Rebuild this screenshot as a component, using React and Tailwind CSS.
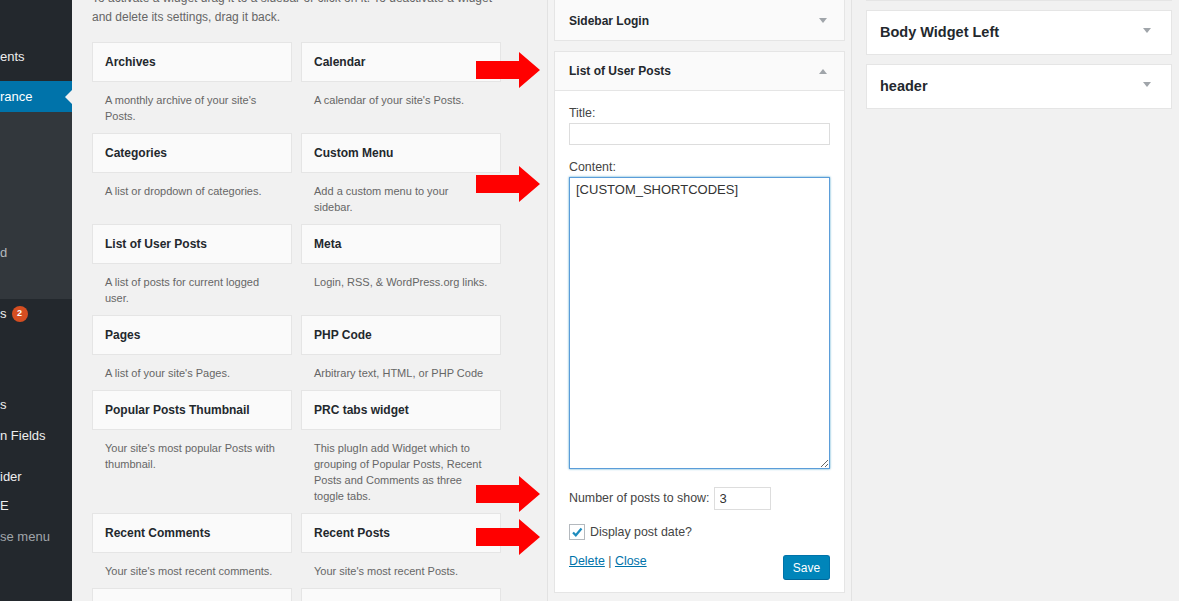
const widgets = [
  ["Archives", "A monthly archive of your site's Posts."],
  ["Calendar", "A calendar of your site's Posts."],
  ["Categories", "A list or dropdown of categories."],
  ["Custom Menu", "Add a custom menu to your sidebar."],
  ["List of User Posts", "A list of posts for current logged user."],
  ["Meta", "Login, RSS, & WordPress.org links."],
  ["Pages", "A list of your site's Pages."],
  ["PHP Code", "Arbitrary text, HTML, or PHP Code"],
  ["Popular Posts Thumbnail", "Your site's most popular Posts with thumbnail."],
  ["PRC tabs widget", "This plugIn add Widget which to grouping of Popular Posts, Recent Posts and Comments as three toggle tabs."],
  ["Recent Comments", "Your site's most recent comments."],
  ["Recent Posts", "Your site's most recent Posts."],
  ["Search", "A search form for your site."],
  ["Tag Cloud", "Your most used tags in cloud format."],
];

function Caret({ up }) {
  return up ? (
    <span className="h-0 w-0 border-x-[4px] border-b-[5px] border-x-transparent border-b-[#a0a5aa]" />
  ) : (
    <span className="h-0 w-0 border-x-[4px] border-t-[5px] border-x-transparent border-t-[#a0a5aa]" />
  );
}

function Arrow({ top }) {
  return (
    <svg className="absolute left-[404px]" style={{ top }} width="64" height="36" viewBox="0 0 64 36">
      <polygon points="0,9 43,9 43,0 64,18 43,36 43,27 0,27" fill="#ff0000" />
    </svg>
  );
}

function AdminMenu() {
  return (
    <div className="flex w-[72px] shrink-0 flex-col bg-[#23282d] text-[13px] text-[#eeeeee]">
      <div className="h-[40px]" />
      <div className="flex h-[34px] items-center">ents</div>
      <div className="h-[7px]" />
      <div className="flex h-[31px] items-center justify-between bg-[#0073aa] text-white">
        <span>rance</span>
        <span className="h-0 w-0 border-y-[7px] border-r-[7px] border-y-transparent border-r-[#f1f1f1]" />
      </div>
      <div className="flex h-[187px] flex-col bg-[#32373c]">
        <div className="h-[131px]" />
        <div className="flex h-[20px] items-center text-[#b4b9be]">d</div>
      </div>
      <div className="mt-[5px] flex h-[20px] items-center gap-[5px]">
        <span>s</span>
        <span className="flex h-[16px] w-[16px] items-center justify-center rounded-full bg-[#d54e21] text-[9px] font-bold text-white">2</span>
      </div>
      <div className="mt-[71px] flex h-[20px] items-center">s</div>
      <div className="mt-[11px] flex h-[20px] items-center">n Fields</div>
      <div className="mt-[21px] flex h-[20px] items-center">ider</div>
      <div className="mt-[9px] flex h-[20px] items-center">E</div>
      <div className="mt-[11px] flex h-[20px] items-center text-[#a0a5aa]">se menu</div>
    </div>
  );
}

function Available() {
  return (
    <div className="w-[475px] shrink-0 pl-[20px]">
      <p className="mt-[-11px] w-[412px] text-[12px] leading-[19px] text-[#666666]">
        To activate a widget drag it to a sidebar or click on it. To deactivate a widget and delete its settings, drag it back.
      </p>
      <div className="mt-[15px] grid grid-cols-[200px_200px] gap-x-[9px]">
        {widgets.map(([title, desc], i) => (
          <div key={i}>
            <div className="flex h-[40px] items-center border border-[#e5e5e5] bg-[#fafafa] pl-[12px] text-[12px] font-bold text-[#23282d]">
              {title}
            </div>
            <p className="pb-[9px] pl-[13px] pr-[12px] pt-[10px] text-[11px] leading-[16px] text-[#666666]">{desc}</p>
          </div>
        ))}
      </div>
    </div>
  );
}

function OpenWidget() {
  return (
    <div className="mt-[10px] border border-[#e5e5e5] bg-white">
      <div className="flex h-[39px] items-center justify-between border-b border-[#e5e5e5] bg-[#fafafa] pl-[14px] pr-[17px] text-[12px] font-bold text-[#23282d]">
        <span>List of User Posts</span>
        <Caret up />
      </div>
      <div className="px-[14px] pb-[12px] pt-[14px] text-[12.4px] text-[#444444]">
        <div className="leading-[16px]">Title:</div>
        <input className="mt-[2px] block h-[22px] w-full border border-[#dddddd] bg-white px-[5px] text-[13px] outline-none" />
        <div className="mt-[14px] leading-[16px]">Content:</div>
        <textarea
          defaultValue="[CUSTOM_SHORTCODES]"
          className="mt-[2px] block h-[292px] w-full border border-[#5b9dd9] bg-white px-[6px] py-[3px] text-[13px] leading-[18px] text-[#333333] shadow-[0_0_2px_rgba(30,140,190,0.8)] outline-none"
        />
        <div className="mt-[18px] flex h-[23px] items-center gap-[4px]">
          <span>Number of posts to show:</span>
          <input
            defaultValue="3"
            className="h-[23px] w-[57px] border border-[#dddddd] bg-white px-[5px] text-[13px] text-[#333333] outline-none"
          />
        </div>
        <div className="mt-[14px] flex h-[16px] items-center gap-[5px]">
          <span className="flex h-[16px] w-[16px] items-center justify-center border border-[#b4b9be] bg-white">
            <svg width="12" height="12" viewBox="0 0 12 12">
              <path d="M2 6.5 L4.8 9.3 L10.5 2.5" fill="none" stroke="#1e8cbe" strokeWidth="2.2" />
            </svg>
          </span>
          <span>Display post date?</span>
        </div>
        <div className="mt-[15px] flex items-start justify-between">
          <div className="mt-[-3px]">
            <span className="text-[#0073aa] underline">Delete</span>
            <span className="text-[#555555]"> | </span>
            <span className="text-[#0073aa] underline">Close</span>
          </div>
          <button className="h-[25px] w-[47px] rounded-[3px] border border-[#0073aa] border-b-[#006799] bg-[#0085ba] text-[12px] text-white">
            Save
          </button>
        </div>
      </div>
    </div>
  );
}

function Sidebars() {
  return (
    <div className="w-[305px] shrink-0 border-x border-[#e2e2e2] bg-[#f3f3f3] px-[6px]">
      <div className="mt-[-1px] flex h-[42px] items-center justify-between border border-[#e5e5e5] bg-[#fafafa] pl-[14px] pr-[17px] pt-[1px] text-[12px] font-bold text-[#23282d]">
        <span>Sidebar Login</span>
        <Caret />
      </div>
      <OpenWidget />
    </div>
  );
}

function RightSidebars() {
  return (
    <div className="ml-[14px] flex w-[306px] shrink-0 flex-col gap-[9px]">
      <div className="h-[1px] w-full bg-[#e5e5e5]" />
      {["Body Widget Left", "header"].map((name) => (
        <div key={name} className="relative flex h-[45px] items-center border border-[#e5e5e5] bg-white pl-[13px] pt-[1px] text-[14.5px] font-bold text-[#23282d]">
          {name}
          <span className="absolute right-[20px] top-[17px] flex">
            <Caret />
          </span>
        </div>
      ))}
    </div>
  );
}

export default function App() {
  return (
    <div className="flex h-[601px] w-[1179px] overflow-hidden bg-[#f1f1f1] font-['Liberation_Sans',Arial,sans-serif]">
      <AdminMenu />
      <div className="relative flex flex-1">
        <Available />
        <Sidebars />
        <RightSidebars />
        <Arrow top={52} />
        <Arrow top={166} />
        <Arrow top={476} />
        <Arrow top={519} />
      </div>
    </div>
  );
}
